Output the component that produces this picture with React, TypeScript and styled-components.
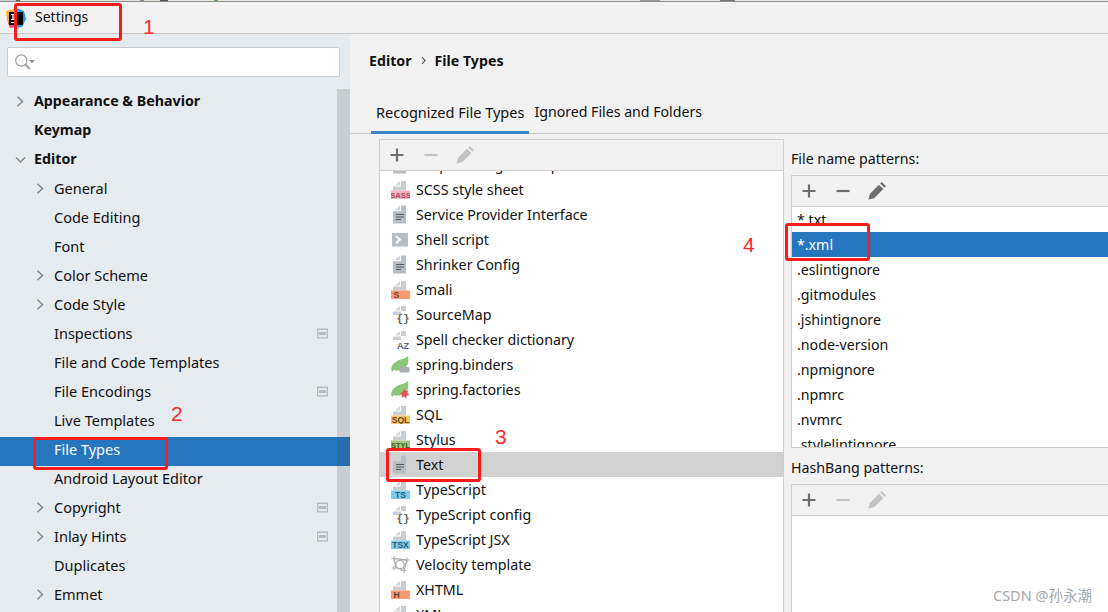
import React from "react";
import styled, { createGlobalStyle } from "styled-components";

const Global = createGlobalStyle`
  html, body { margin: 0; padding: 0; width: 1108px; height: 612px; overflow: hidden; }
  body { font-family: "Noto Sans", "Noto Sans CJK SC", sans-serif; font-size: 14px; color: #111; background: #f2f2f2; }
  * { box-sizing: border-box; }
`;

const Page = styled.div`
  position: relative;
  width: 1108px;
  height: 612px;
  overflow: hidden;
  display: flex;
  flex-direction: column;
`;
const TopStrip = styled.div`
  height: 2px;
  flex: none;
  border-bottom: 1px solid #8c8c8c;
  background: linear-gradient(90deg, #cfcfcf 0 16px, #555 16px 20px, #e4e4d8 20px 140px, #888 140px 144px, #e4e4d8 144px 160px, #555 160px 168px, #e8e8e0 168px 214px, #6aa86a 214px 218px, #e8e8e0 218px 640px, #9a9a9a 640px 660px, #e8e8e0 660px 720px, #777 720px 735px, #e8e8e0 735px 100%);
`;
const TitleBar = styled.div`
  height: 32px;
  flex: none;
  display: flex;
  align-items: center;
  padding: 0 0 0 6px;
  gap: 9px;
  background: #f2f2f2;
  border-bottom: 1px solid #c8c8c8;
`;
const TitleText = styled.span`
  font-size: 14px;
  position: relative;
  top: -1px;
`;
const Body = styled.div`
  flex: 1;
  display: flex;
  min-height: 0;
`;
const Sidebar = styled.aside`
  width: 350px;
  flex: none;
  background: #e6ebf0;
  display: flex;
  flex-direction: column;
  position: relative;
  overflow: hidden;
`;
const SearchWrap = styled.div`
  height: 55px;
  flex: none;
  padding: 13px 10px 12px 7px;
`;
const SearchBox = styled.div`
  height: 30px;
  background: #fff;
  border: 1px solid #c9ccd0;
  border-radius: 2px;
  display: flex;
  align-items: center;
  padding-left: 7px;
`;
const Scrollbar = styled.div`
  position: absolute;
  right: 0;
  top: 55px;
  bottom: 0;
  width: 13px;
  background: rgba(60, 65, 75, 0.17);
`;
const Tree = styled.div`
  display: flex;
  flex-direction: column;
`;
const Row = styled.div<{ $level: number; $selected?: boolean; $bold?: boolean }>`
  height: 29px;
  flex: none;
  display: flex;
  align-items: flex-start;
  padding-top: 2px;
  padding-left: ${(p) => (p.$level === 0 ? 34 : 54)}px;
  padding-right: 22px;
  position: relative;
  font-weight: ${(p) => (p.$bold ? 700 : 400)};
  background: ${(p) => (p.$selected ? "#2675bf" : "transparent")};
  color: ${(p) => (p.$selected ? "#fff" : "#111")};
  font-size: ${(p) => (p.$bold ? 14.25 : 14.5)}px;
`;
const RowLabel = styled.span`
  flex: 1;
  white-space: nowrap;
  line-height: 20px;
`;
const BadgeSlot = styled.span`
  flex: none;
  display: flex;
  height: 20px;
  align-items: center;
`;
const Arrow = styled.svg<{ $level: number }>`
  position: absolute;
  left: ${(p) => (p.$level === 0 ? 15 : 35)}px;
  top: 7px;
  width: 11px;
  height: 11px;
  fill: none;
  stroke: #85898d;
  stroke-width: 1.5;
`;
const Main = styled.main`
  flex: 1;
  min-width: 0;
  display: flex;
  flex-direction: column;
`;
const Breadcrumb = styled.div`
  height: 53px;
  flex: none;
  display: flex;
  align-items: center;
  padding: 0 0 0 19px;
  font-weight: 700;
  font-size: 14.2px;
  gap: 8px;
`;
const Tabs = styled.div`
  height: 47px;
  flex: none;
  display: flex;
  align-items: flex-end;
  padding-left: 21px;
  border-bottom: 1px solid #c8c8c8;
  margin-bottom: 5px;
`;
const Tab = styled.div<{ $active?: boolean }>`
  height: 34px;
  padding: 0 5px;
  white-space: nowrap;
  position: relative;
  margin-bottom: -1px;
  border-bottom: 3px solid ${(p) => (p.$active ? "#3e80c9" : "transparent")};
  line-height: 24px;
  font-size: ${(p) => (p.$active ? 14.5 : 14.15)}px;
`;
const Columns = styled.div`
  flex: 1;
  min-height: 0;
  display: flex;
  padding-left: 29px;
`;
const TypesPanel = styled.section`
  width: 405px;
  flex: none;
  display: flex;
  flex-direction: column;
  border: 1px solid #cfcfcf;
  border-bottom: none;
`;
const Toolbar = styled.div`
  height: 31px;
  flex: none;
  display: flex;
  align-items: center;
  gap: 14px;
  padding-left: 7px;
  background: #f2f2f2;
  border-bottom: 1px solid #cfcfcf;
`;
const ToolIcon = styled.svg<{ $off?: boolean }>`
  width: 20px;
  height: 20px;
  flex: none;
  color: ${(p) => (p.$off ? "#c3c3c3" : "#6e6e6e")};
`;
const ListViewport = styled.div`
  flex: 1;
  min-height: 0;
  overflow: hidden;
  background: #fff;
`;
const TypesList = styled.div`
  margin-top: -19px;
  display: flex;
  flex-direction: column;
`;
const TypeRow = styled.div<{ $selected?: boolean }>`
  height: 25px;
  flex: none;
  display: flex;
  align-items: center;
  gap: 6px;
  padding-left: 11px;
  white-space: nowrap;
  background: ${(p) => (p.$selected ? "#d2d2d2" : "transparent")};
  font-size: 14.25px;
`;
const PatternsColumn = styled.div`
  flex: 1;
  min-width: 0;
  display: flex;
  flex-direction: column;
  padding-left: 7px;
`;
const PanelLabel = styled.div`
  height: 36px;
  flex: none;
  display: flex;
  align-items: center;
  padding-top: 2px;
  font-size: 14.2px;
`;
const PatternBox = styled.section<{ $grow?: boolean }>`
  display: flex;
  flex-direction: column;
  border: 1px solid #cfcfcf;
  border-right: none;
  ${(p) => (p.$grow ? "flex: 1; min-height: 0; border-bottom: none;" : "height: 273px; flex: none;")}
`;
const PatternRow = styled.div<{ $selected?: boolean }>`
  height: 25px;
  flex: none;
  display: flex;
  align-items: center;
  padding-left: 5px;
  font-size: 14.2px;
  white-space: nowrap;
  background: ${(p) => (p.$selected ? "#2675bf" : "transparent")};
  color: ${(p) => (p.$selected ? "#fff" : "#111")};
`;
const PatternList = styled.div`
  display: flex;
  flex-direction: column;
`;
const Mark = styled.div<{ $l: number; $t: number; $w: number; $h: number }>`
  position: absolute;
  left: ${(p) => p.$l}px;
  top: ${(p) => p.$t}px;
  width: ${(p) => p.$w}px;
  height: ${(p) => p.$h}px;
  border: 3px solid #f81c1c;
  border-radius: 3px;
  pointer-events: none;
`;
const Num = styled.div<{ $l: number; $t: number }>`
  position: absolute;
  left: ${(p) => p.$l}px;
  top: ${(p) => p.$t}px;
  color: #f92b2b;
  font-family: "Liberation Sans", sans-serif;
  font-size: 21px;
  line-height: 24px;
`;
const Watermark = styled.div`
  position: absolute;
  left: 993px;
  top: 586px;
  color: #a9a9a9;
  font-size: 14.5px;
  line-height: 18px;
  white-space: nowrap;
`;

const Chevron = ({ level, open }: { level: number; open?: boolean }) => (
  <Arrow $level={level} viewBox="0 0 11 11">
    {open ? <path d="M1 3.5l4.5 4.5L10 3.5" /> : <path d="M2.5 0.7l5 4.8-5 4.8" />}
  </Arrow>
);

const ProjectBadge = () => (
  <BadgeSlot>
    <svg width="11" height="11" viewBox="0 0 11 11">
      <rect x="0" y="0.5" width="11" height="10" fill="#b5bcc3" />
      <rect x="1.3" y="2" width="8.4" height="7.2" fill="#e6ebf0" />
      <rect x="2" y="4" width="7" height="3" fill="#b5bcc3" />
    </svg>
  </BadgeSlot>
);

const Logo = () => (
  <svg width="20" height="20" viewBox="0 0 20 20" style={{ flex: "none" }}>
    <path d="M0 3 L8 1 L9 14 L3 18 L1 12Z" fill="#f9b233" />
    <path d="M2 14 L8 10 L10 19 L4 20Z" fill="#f0408c" />
    <path d="M10 0 L18 3 L20 11 L16 19 L9 20Z" fill="#1c9de8" />
    <rect x="3" y="4" width="14" height="13" fill="#000" />
    <rect x="5" y="14" width="5" height="1" fill="#fff" />
    <rect x="5" y="6" width="4" height="1" fill="#fff" />
    <rect x="6.3" y="6" width="1.4" height="5.5" fill="#fff" />
    <rect x="5" y="11" width="4" height="1" fill="#fff" />
  </svg>
);

const SearchIcon = () => (
  <svg width="24" height="18" viewBox="0 0 24 18" fill="none">
    <circle cx="6.3" cy="7.5" r="5.6" stroke="#9aa0a5" strokeWidth="1.2" />
    <path d="M10.3 11.5L14.8 16" stroke="#9aa0a5" strokeWidth="1.8" />
    <path d="M14 7h6l-3 3.2z" fill="#8b9095" />
  </svg>
);

const Plus = ({ off }: { off?: boolean }) => (
  <ToolIcon $off={off} viewBox="0 0 20 20">
    <path d="M10 3.5v13M3.5 10h13" stroke="currentColor" strokeWidth="2.2" />
  </ToolIcon>
);
const Minus = ({ off }: { off?: boolean }) => (
  <ToolIcon $off={off} viewBox="0 0 20 20">
    <path d="M3.5 10h13" stroke="currentColor" strokeWidth="2.2" />
  </ToolIcon>
);
const Pencil = ({ off }: { off?: boolean }) => (
  <ToolIcon $off={off} viewBox="0 0 20 20">
    <path d="M1.5 18.5l1.3-5.6L12 3.7l4.3 4.3-9.2 9.2zM13.2 2.6l1.6-1.6 4.2 4.2-1.6 1.6z" fill="currentColor" />
  </ToolIcon>
);

type IconKind = "text" | "shell" | "sass" | "smali" | "braces" | "az" | "binders" | "factories" | "sql" | "styl" | "ts" | "tsx" | "velocity" | "html" | "xml";

const Tag = ({ label, color, text }: { label: string; color: string; text: string }) => (
  <>
    <path d="M9 1v4.5H3.5z" fill="#d5d9dc" />
    <path d="M10 1h5v9.5H2v-4h8z" fill="#c9ced2" />
    <rect x="0" y="10.5" width="19" height="8.5" fill={color} />
    <text
      x={label.length === 1 ? 2.5 : 9.5}
      y="18"
      fontSize={label.length > 3 ? 7.5 : 8.5}
      fontWeight="700"
      textAnchor={label.length === 1 ? "start" : "middle"}
      fill={text}
      fontFamily="Liberation Sans, sans-serif"
    >
      {label}
    </text>
  </>
);

const SmallPage = () => (
  <>
    <path d="M9 1v4.5H3.5z" fill="#d5d9dc" />
    <path d="M10 1h5v5h-5v4H2V6.5h8z" fill="#c9ced2" />
  </>
);

const FileIcon = ({ kind }: { kind: IconKind }) => {
  let c: React.ReactNode = null;
  switch (kind) {
    case "text":
      c = (
        <>
          <path d="M9 0.5v4.8H3.5z" fill="#d0d4d8" />
          <path d="M10 0.5h5V18.5H2V6.3h8z" fill="#b8bec3" />
          <path d="M5 9.5h8M5 12h8M5 14.5h5" stroke="#565a5e" strokeWidth="1.2" />
        </>
      );
      break;
    case "shell":
      c = (
        <>
          <rect x="1" y="3" width="16" height="13.5" fill="#b8bec3" />
          <path d="M5 6l4 3.7-4 3.7" stroke="#fff" strokeWidth="1.9" fill="none" />
        </>
      );
      break;
    case "sass":
      c = <Tag label="SASS" color="#f5b3bd" text="#b14a60" />;
      break;
    case "smali":
      c = <Tag label="S" color="#fb9a6c" text="#5b4640" />;
      break;
    case "html":
      c = <Tag label="H" color="#fb9a6c" text="#5b4640" />;
      break;
    case "xml":
      c = <Tag label="X" color="#fb9a6c" text="#5b4640" />;
      break;
    case "sql":
      c = <Tag label="SQL" color="#f9c56a" text="#5b4a28" />;
      break;
    case "styl":
      c = <Tag label="STYL" color="#a2c87e" text="#3f5a2a" />;
      break;
    case "ts":
      c = <Tag label="TS" color="#7ccdf0" text="#2b5a78" />;
      break;
    case "tsx":
      c = <Tag label="TSX" color="#7ccdf0" text="#2b5a78" />;
      break;
    case "braces":
      c = (
        <>
          <SmallPage />
          <text x="12" y="17" fontSize="11" fontWeight="700" textAnchor="middle" fill="#666" fontFamily="Liberation Mono, monospace">
            {"{}"}
          </text>
        </>
      );
      break;
    case "az":
      c = (
        <>
          <SmallPage />
          <text x="12" y="18.5" fontSize="9" fontWeight="700" textAnchor="middle" fill="#5f6468" fontFamily="Liberation Sans, sans-serif">
            AZ
          </text>
        </>
      );
      break;
    case "binders":
      c = (
        <>
          <path d="M0 14C1 9 3 8 6 6c4-2 8-2 11-5 1 6 0 9-3 12-4 3-8 3-11 2l-2 2z" fill="#8cc67a" />
          <rect x="8.5" y="12" width="10" height="5.5" rx="1.5" fill="#a8adb2" />
        </>
      );
      break;
    case "factories":
      c = (
        <>
          <path d="M0 14C1 9 3 8 6 6c4-2 8-2 11-5 1 6 0 9-3 12-4 3-8 3-11 2l-2 2z" fill="#8cc67a" />
          <path d="M13 8.5l1.4 2.5 2.9-.8-.9 2.9 2.2 2-2.9.5-.5 2.9-2.1-2-2.6 1.3.5-2.9-2.3-1.9 2.9-.6z" fill="#e2505c" />
        </>
      );
      break;
    case "velocity":
      c = (
        <>
          <path d="M3 3.5l13 1.5-3 10.5-8-3z" fill="none" stroke="#a9aeb3" strokeWidth="1.3" />
          <circle cx="9" cy="9.5" r="4.2" fill="none" stroke="#a9aeb3" strokeWidth="1.3" />
          <path d="M0.5 3.5h5M3 1v5M13.5 5h5M16 2.5v5M0.5 13h5M3 10.5v5M10.5 15.5h5M13 13v5" stroke="#a9aeb3" strokeWidth="1" />
        </>
      );
      break;
  }
  return (
    <svg width="19" height="19" viewBox="0 0 19 19" style={{ flex: "none" }}>
      {c}
    </svg>
  );
};

const treeRows: { label: string; level: number; bold?: boolean; arrow?: "open" | "closed"; badge?: boolean; selected?: boolean }[] = [
  { label: "Appearance & Behavior", level: 0, bold: true, arrow: "closed" },
  { label: "Keymap", level: 0, bold: true },
  { label: "Editor", level: 0, bold: true, arrow: "open" },
  { label: "General", level: 1, arrow: "closed" },
  { label: "Code Editing", level: 1 },
  { label: "Font", level: 1 },
  { label: "Color Scheme", level: 1, arrow: "closed" },
  { label: "Code Style", level: 1, arrow: "closed" },
  { label: "Inspections", level: 1, badge: true },
  { label: "File and Code Templates", level: 1 },
  { label: "File Encodings", level: 1, badge: true },
  { label: "Live Templates", level: 1 },
  { label: "File Types", level: 1, selected: true },
  { label: "Android Layout Editor", level: 1 },
  { label: "Copyright", level: 1, arrow: "closed", badge: true },
  { label: "Inlay Hints", level: 1, arrow: "closed", badge: true },
  { label: "Duplicates", level: 1 },
  { label: "Emmet", level: 1, arrow: "closed" },
];

const typeRows: { label: string; icon: IconKind; selected?: boolean }[] = [
  { label: "Scope Configure Map", icon: "text" },
  { label: "SCSS style sheet", icon: "sass" },
  { label: "Service Provider Interface", icon: "text" },
  { label: "Shell script", icon: "shell" },
  { label: "Shrinker Config", icon: "text" },
  { label: "Smali", icon: "smali" },
  { label: "SourceMap", icon: "braces" },
  { label: "Spell checker dictionary", icon: "az" },
  { label: "spring.binders", icon: "binders" },
  { label: "spring.factories", icon: "factories" },
  { label: "SQL", icon: "sql" },
  { label: "Stylus", icon: "styl" },
  { label: "Text", icon: "text", selected: true },
  { label: "TypeScript", icon: "ts" },
  { label: "TypeScript config", icon: "braces" },
  { label: "TypeScript JSX", icon: "tsx" },
  { label: "Velocity template", icon: "velocity" },
  { label: "XHTML", icon: "html" },
  { label: "XML", icon: "xml" },
];

const patterns = ["*.txt", "*.xml", ".eslintignore", ".gitmodules", ".jshintignore", ".node-version", ".npmignore", ".npmrc", ".nvmrc", ".stylelintignore"];

export default function App() {
  return (
    <Page>
      <Global />
      <TopStrip />
      <TitleBar>
        <Logo />
        <TitleText>Settings</TitleText>
      </TitleBar>
      <Body>
        <Sidebar>
          <SearchWrap>
            <SearchBox>
              <SearchIcon />
            </SearchBox>
          </SearchWrap>
          <Tree>
            {treeRows.map((r) => (
              <Row key={r.label} $level={r.level} $bold={r.bold} $selected={r.selected}>
                {r.arrow && <Chevron level={r.level} open={r.arrow === "open"} />}
                <RowLabel>{r.label}</RowLabel>
                {r.badge && <ProjectBadge />}
              </Row>
            ))}
          </Tree>
          <Scrollbar />
        </Sidebar>
        <Main>
          <Breadcrumb>
            <span>Editor</span>
            <svg width="7" height="9" viewBox="0 0 7 9" fill="none">
              <path d="M2 1l3 3.5L2 8" stroke="#444" strokeWidth="1.1" />
            </svg>
            <span>File Types</span>
          </Breadcrumb>
          <Tabs>
            <Tab $active>Recognized File Types</Tab>
            <Tab>Ignored Files and Folders</Tab>
          </Tabs>
          <Columns>
            <TypesPanel>
              <Toolbar>
                <Plus />
                <Minus off />
                <Pencil off />
              </Toolbar>
              <ListViewport>
                <TypesList>
                  {typeRows.map((t) => (
                    <TypeRow key={t.label} $selected={t.selected}>
                      <FileIcon kind={t.icon} />
                      <span>{t.label}</span>
                    </TypeRow>
                  ))}
                </TypesList>
              </ListViewport>
            </TypesPanel>
            <PatternsColumn>
              <PanelLabel>File name patterns:</PanelLabel>
              <PatternBox>
                <Toolbar>
                  <Plus />
                  <Minus />
                  <Pencil />
                </Toolbar>
                <ListViewport>
                  <PatternList>
                    {patterns.map((p) => (
                      <PatternRow key={p} $selected={p === "*.xml"}>
                        {p}
                      </PatternRow>
                    ))}
                  </PatternList>
                </ListViewport>
              </PatternBox>
              <PanelLabel>HashBang patterns:</PanelLabel>
              <PatternBox $grow>
                <Toolbar>
                  <Plus />
                  <Minus off />
                  <Pencil off />
                </Toolbar>
                <ListViewport />
              </PatternBox>
            </PatternsColumn>
          </Columns>
        </Main>
      </Body>
      <Mark $l={14} $t={3} $w={108} $h={38} />
      <Mark $l={33} $t={437} $w={135} $h={33} />
      <Mark $l={386} $t={448} $w={95} $h={34} />
      <Mark $l={785} $t={223} $w={85} $h={38} />
      <Num $l={143} $t={15}>1</Num>
      <Num $l={171} $t={402}>2</Num>
      <Num $l={495} $t={425}>3</Num>
      <Num $l={743} $t={233}>4</Num>
      <Watermark>CSDN @孙永潮</Watermark>
    </Page>
  );
}
